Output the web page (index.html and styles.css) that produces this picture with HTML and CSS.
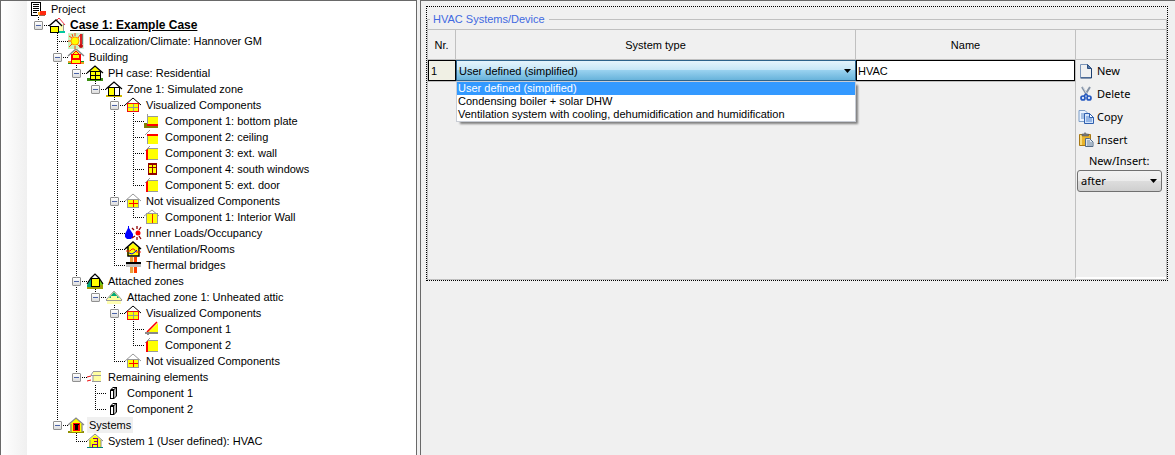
FILE: index.html
```html
<!DOCTYPE html>
<html lang="en">
<head>
<meta charset="utf-8">
<title>HVAC Systems/Device</title>
<link rel="stylesheet" href="styles.css">
</head>
<body>
<svg class="sprite" aria-hidden="true">
  <defs>
    <linearGradient id="paper" x1="0" y1="0" x2="1" y2="1"><stop offset="0" stop-color="#fff"/><stop offset="0.6" stop-color="#f4f8fd"/><stop offset="1" stop-color="#a9c4e6"/></linearGradient>
    <symbol id="i-project" viewBox="0 0 19 16">
      <path d="M2 1h10v13h-10z" fill="#fff"/><path d="M2 1h10v1h-10zM2 1h1v14h-1zM2 14h7v1h-7zM11 1h1v9h-1z" fill="#000"/>
      <path d="M4 3h6v1h-6zM4 5h6v1h-6zM4 7h6v1h-6zM4 9h6v1h-6zM4 11h4v1h-4z" fill="#000"/>
      <path d="M11 10h6v4h-6z" fill="#ff2a10"/><path d="M9 11h2v3h-2z" fill="#ffa820"/><path d="M10 14h6v1h-6z" fill="#9a6a50"/>
    </symbol>
    <symbol id="i-case" viewBox="0 0 19 16">
      <path d="M6 6l5-5 6 7" fill="#fff" stroke="#f03040"/><path d="M10 7h5v7h-5z" fill="#ffffb0"/><path d="M15 7h1v7h-1z" fill="#999"/>
      <path d="M9 14h8v2h-8z" fill="#00c8a0"/>
      <path d="M1 9l7-6 6 6z" fill="#fff"/><path d="M1 9l7-6 6 6" fill="none" stroke="#000" stroke-width="1.300"/><path d="M2 9h9v7h-9z" fill="#000"/><path d="M3 10h7v5h-7z" fill="#ff0"/>
    </symbol>
    <symbol id="i-climate" viewBox="0 0 19 16">
      <path d="M1 0h16v16h-16z" fill="#c9f5bd"/><path d="M11 0h6v16h-6z" fill="#d8eed8"/>
      <path d="M8 0v3M8 13v3M1 8h3M2 3l3 2M13 2l-2 3M2 14l3-3M13 14l-3-3M5 1l1 3" stroke="#ff3b10" fill="none"/>
      <circle cx="8" cy="8" r="4" fill="#ff0" stroke="#f90"/>
      <path d="M13 1h2v11h-2z" fill="#e02020"/><path d="M15 1h1v10h-1z" fill="#777"/><circle cx="14" cy="13" r="2" fill="#c01010"/>
    </symbol>
    <symbol id="i-building" viewBox="0 0 19 16">
      <path d="M1 12h16v3h-16z" fill="#0c9a20"/><path d="M1 12h3v2h-3zM13 13h4v2h-4z" fill="#e8a020"/>
      <path d="M5 5l4-4 4 4z" fill="#ff0"/><path d="M4 5h10v10h-10z" fill="#f00"/><path d="M6 6h6v3h-6zM5 11h8v3h-8z" fill="#ff0"/>
      <path d="M5 6l4-4 4 4" fill="none" stroke="#f00"/><path d="M1 7l8-7 8 7" fill="none" stroke="#888" stroke-width="1.500"/>
    </symbol>
    <symbol id="i-case-house" viewBox="0 0 19 16">
      <path d="M1 13h16v3h-16z" fill="#3a8f10"/><path d="M3 7l6-6 6 6z" fill="#ff0"/><path d="M4 6h11v9h-11z" fill="#000"/>
      <path d="M5 7h4v3h-4zM10 7h4v3h-4zM5 11h4v3h-4zM10 11h4v3h-4z" fill="#ff0"/><path d="M1 8l8-7 8 7" fill="none" stroke="#000" stroke-width="1.200"/>
    </symbol>
    <symbol id="i-zone" viewBox="0 0 19 16">
      <path d="M1 14h16v2h-16z" fill="#d0b800"/><path d="M3 6h12v9h-12z" fill="#000"/><path d="M4 7h5v7h-5z" fill="#ff0"/><path d="M10 7h4v7h-4z" fill="#fff"/>
      <path d="M1 8l8-7 8 7" fill="none" stroke="#000" stroke-width="1.200"/>
    </symbol>
    <symbol id="i-visual" viewBox="0 0 19 16">
      <path d="M1 8l8-7 8 7" fill="none" stroke="#000"/><path d="M3 6h12v9h-12z" fill="#f01010"/><path d="M4 7h10v7h-10z" fill="#ff0"/><path d="M9 7h1v7h-1zM4 10h10v1h-10z" fill="#999"/>
    </symbol>
    <symbol id="i-hidden" viewBox="0 0 19 16">
      <path d="M1 8l8-7 8 7" fill="none" stroke="#999"/><path d="M3 6h12v9h-12z" fill="#999"/><path d="M4 7h10v7h-10z" fill="#ff0"/><path d="M9 7h1v7h-1zM5 10h9v1h-9z" fill="#f00"/>
    </symbol>
    <symbol id="i-interior" viewBox="0 0 19 16">
      <path d="M1 7l8-6 7 6" fill="none" stroke="#999"/><path d="M3 4h12v11h-12z" fill="#999"/><path d="M4 5h10v9h-10z" fill="#ff0"/><path d="M9 5h1v9h-1z" fill="#f02000"/>
    </symbol>
    <symbol id="i-plate" viewBox="0 0 19 16">
      <path d="M1 10h14v5h-14z" fill="#808000"/><path d="M4 3h11v8h-11z" fill="#ff0"/><path d="M4 11h11v2h-11z" fill="#f00"/><path d="M4 1h1v10h-1zM4 3h11v1h-11z" fill="#999"/>
    </symbol>
    <symbol id="i-ceiling" viewBox="0 0 19 16">
      <path d="M4 6h11v9h-11z" fill="#ff0"/><path d="M4 5h11v2h-11z" fill="#f00"/><path d="M4 7h1v8h-1z" fill="#999"/><path d="M2 6l5-5" stroke="#999"/>
    </symbol>
    <symbol id="i-wall" viewBox="0 0 19 16">
      <path d="M4 4h11v11h-11z" fill="#ff0"/><path d="M3 4h2v11h-2z" fill="#f00"/><path d="M4 3h11v1h-11zM5 14h10v1h-10z" fill="#999"/><path d="M2 6l5-5" stroke="#999"/>
    </symbol>
    <symbol id="i-window" viewBox="0 0 19 16">
      <path d="M5 2h9v12h-9z" fill="#900000"/><path d="M6 4h3v2h-3zM10 4h3v2h-3zM6 7h3v5h-3zM10 7h3v5h-3z" fill="#ff0"/>
    </symbol>
    <symbol id="i-loads" viewBox="0 0 19 16">
      <path d="M4 1h1v2l4 6v3l-2 2h-4l-2-2v-3l3-6z" fill="#00f"/><circle cx="14" cy="8" r="2.500" fill="#f00"/>
      <path d="M8 3l2 2M13 1v3M17 2l-2 3M8 13l3-2M13 15v-3M17 14l-2-3" stroke="#900000" stroke-width="1.300"/>
    </symbol>
    <symbol id="i-vent" viewBox="0 0 19 16">
      <path d="M3 7l6-5 6 5v8h-12z" fill="#ff0"/><path d="M1 8l8-7 8 7M4 6v9h11v-9" fill="none" stroke="#000" stroke-width="1.400"/>
      <path d="M2 10h4l2-2h2l2 3h5" fill="none" stroke="#f02010"/><path d="M5 12l3 1 3-2 2-2" fill="none" stroke="#00f"/>
    </symbol>
    <symbol id="i-bridge" viewBox="0 0 19 16">
      <path d="M6 0h3v16h-3z" fill="#e8a040"/><path d="M9 0h1v16h-1z" fill="#fff0c0"/><path d="M10 0h3v16h-3z" fill="#ff3a00"/><path d="M2 5h15v2h-15z" fill="#000"/><path d="M2 7h15v3h-15z" fill="#c0c0c0"/>
    </symbol>
    <symbol id="i-attached" viewBox="0 0 19 16">
      <path d="M1 12l4-7h8l4 7z" fill="#00a878"/><path d="M13 5l4 5v3h-4z" fill="#70c810"/><path d="M1 12h16v4h-16z" fill="#a0a000"/><path d="M1 12h4v2h-4z" fill="#00a878"/>
      <path d="M5 6l4-5 4 5z" fill="#fff"/><path d="M1 11l4-6 4-4 4 4 4 6" fill="none" stroke="#000" stroke-width="1.200"/><path d="M5 5h9v9h-9z" fill="#000"/><path d="M6 6h7v7h-7z" fill="#ff0"/>
    </symbol>
    <symbol id="i-attic" viewBox="0 0 19 16">
      <path d="M2 11h14v4h-14z" fill="#ffffb0"/><path d="M1 11l8-9 8 9z" fill="#ffffa0"/><path d="M4 9l5-6 5 6z" fill="#00a878"/><path d="M6 7h6v4h-6z" fill="#ffffa0"/><path d="M1 11l8-9 8 9" fill="none" stroke="#999"/><path d="M1 11h16v1h-16z" fill="#999"/>
    </symbol>
    <symbol id="i-slope" viewBox="0 0 19 16">
      <path d="M5 11l10-9v9z" fill="#ff0"/><path d="M4 11l10-10" stroke="#f00" stroke-width="1.600"/><path d="M2 11h13v2h-13zM4 13h2v1h-2z" fill="#888"/>
    </symbol>
    <symbol id="i-remaining" viewBox="0 0 19 16">
      <path d="M7 3h8v9h-8z" fill="#ffffa0"/><path d="M7 2h8v1h-8zM5 6h10v1h-10zM6 12h9v1h-9z" fill="#999"/><path d="M7 7v5M7 3l-2 3" stroke="#999"/><path d="M1 8l4-1M1 12l4-1" stroke="#f01010"/>
    </symbol>
    <symbol id="i-panel" viewBox="0 0 19 16">
      <path d="M5 5l3-3h4v9l-3 3h-4z" fill="#000"/><path d="M6 6h2v7h-2z" fill="#fff"/><path d="M9 5l2-2v8l-2 2z" fill="#b0b0b0"/><path d="M7 4l1-1h2l-1 1z" fill="#fff"/>
    </symbol>
    <symbol id="i-systems" viewBox="0 0 19 16">
      <path d="M1 14h16v2h-16z" fill="#909000"/><path d="M3 7l6-6 6 6v8h-12z" fill="#ff0"/><path d="M1 8l8-7 8 7M4 7v8M15 7v8" fill="none" stroke="#888" stroke-width="1.300"/>
      <path d="M6 6h7v8h-7z" fill="#f00"/><path d="M7 7h5v1h-1v5h-3v-5h-1z" fill="#000"/>
    </symbol>
    <symbol id="i-system" viewBox="0 0 19 16">
      <path d="M1 14h16v1h-16z" fill="#008080"/><path d="M3 7l6-5 6 5v7h-12z" fill="#ff0"/><path d="M1 8l8-7 8 7M4 7v7M15 7v7" fill="none" stroke="#888"/>
      <path d="M7 5h5v10h-1v-3h-4v3h-1v-4h5v-2h-3v-1h3v-2h-4z" fill="#800080"/>
    </symbol>
    <symbol id="i-new" viewBox="0 0 16 16">
      <path d="M2.500 1.500h7l4 4v9h-11z" fill="url(#paper)" stroke="#7a94b8"/><path d="M13.500 5.500v9.500h-11" fill="none" stroke="#1d3f70"/><path d="M9.500 1.500v4h4z" fill="#557aa8" stroke="#2e4f80"/>
    </symbol>
    <symbol id="i-delete" viewBox="0 0 16 16">
      <path d="M4 1l5 8M12 1l-5 8" stroke="#8593a6" stroke-width="2"/><path d="M5 1l4 7" stroke="#d3dae3"/>
      <circle cx="5" cy="12" r="2" fill="#dfe9fa" stroke="#2458c0" stroke-width="1.700"/><circle cx="11" cy="12" r="2" fill="#dfe9fa" stroke="#2458c0" stroke-width="1.700"/><path d="M6 10l2-2 2 2" fill="none" stroke="#2458c0" stroke-width="1.500"/>
    </symbol>
    <symbol id="i-copy" viewBox="0 0 16 16">
      <path d="M1 1.500h6l3 3v8h-9z" fill="#eaf3ff" stroke="#7d9ec8"/><path d="M3 5h4M3 7h3M3 9h3" stroke="#5e8cc8"/>
      <path d="M6.500 4.500h5l4 4v6h-9z" fill="#d4e5fb" stroke="#2f5fae"/><path d="M8 8h4M8 10h6M8 12h6" stroke="#5585cf"/><path d="M11.500 4.500v4h4z" fill="#fff" stroke="#2f5fae"/>
    </symbol>
    <symbol id="i-insert" viewBox="0 0 16 16">
      <path d="M1.500 2.500h11v11h-11z" fill="#e9b32a" stroke="#a87814"/><path d="M2 3h2v10h-2z" fill="#f9dc78"/><path d="M4 3v-1h2l1-1.500 1.500 1.500h2v2h-6.500z" fill="#777" stroke="#555" stroke-width=".5"/>
      <path d="M7.500 6.500h4l3.500 3.500v4.500h-7.500z" fill="#dce5ee" stroke="#536b86"/><path d="M9 9h3M9 11h5M9 13h5" stroke="#7087a0"/>
    </symbol>
  </defs>
</svg>

<div class="app">
  <nav class="tree-pane" aria-label="Project tree">
    <div class="tree">
      <div class="row"><svg class="icon"><use href="#i-project"/></svg><span class="label">Project</span></div>
      <ul class="branch root">
        <li><div class="row"><button class="toggle" aria-label="Collapse Case 1"></button><svg class="icon"><use href="#i-case"/></svg><span class="label current">Case 1: Example Case</span></div>
          <ul class="branch">
            <li><div class="row leaf"><svg class="icon"><use href="#i-climate"/></svg><span class="label">Localization/Climate: Hannover GM</span></div></li>
            <li><div class="row"><button class="toggle" aria-label="Collapse Building"></button><svg class="icon"><use href="#i-building"/></svg><span class="label">Building</span></div>
              <ul class="branch">
                <li><div class="row"><button class="toggle" aria-label="Collapse PH case"></button><svg class="icon"><use href="#i-case-house"/></svg><span class="label">PH case: Residential</span></div>
                  <ul class="branch">
                    <li><div class="row"><button class="toggle" aria-label="Collapse Zone 1"></button><svg class="icon"><use href="#i-zone"/></svg><span class="label">Zone 1: Simulated zone</span></div>
                      <ul class="branch">
                        <li><div class="row"><button class="toggle" aria-label="Collapse Visualized Components"></button><svg class="icon"><use href="#i-visual"/></svg><span class="label">Visualized Components</span></div>
                          <ul class="branch">
                            <li><div class="row leaf"><svg class="icon"><use href="#i-plate"/></svg><span class="label">Component 1: bottom plate</span></div></li>
                            <li><div class="row leaf"><svg class="icon"><use href="#i-ceiling"/></svg><span class="label">Component 2: ceiling</span></div></li>
                            <li><div class="row leaf"><svg class="icon"><use href="#i-wall"/></svg><span class="label">Component 3: ext. wall</span></div></li>
                            <li><div class="row leaf"><svg class="icon"><use href="#i-window"/></svg><span class="label">Component 4: south windows</span></div></li>
                            <li><div class="row leaf"><svg class="icon"><use href="#i-wall"/></svg><span class="label">Component 5: ext. door</span></div></li>
                          </ul>
                        </li>
                        <li><div class="row"><button class="toggle" aria-label="Collapse Not visualized Components"></button><svg class="icon"><use href="#i-hidden"/></svg><span class="label">Not visualized Components</span></div>
                          <ul class="branch">
                            <li><div class="row leaf"><svg class="icon"><use href="#i-interior"/></svg><span class="label">Component 1: Interior Wall</span></div></li>
                          </ul>
                        </li>
                        <li><div class="row leaf"><svg class="icon"><use href="#i-loads"/></svg><span class="label">Inner Loads/Occupancy</span></div></li>
                        <li><div class="row leaf"><svg class="icon"><use href="#i-vent"/></svg><span class="label">Ventilation/Rooms</span></div></li>
                        <li><div class="row leaf"><svg class="icon"><use href="#i-bridge"/></svg><span class="label">Thermal bridges</span></div></li>
                      </ul>
                    </li>
                  </ul>
                </li>
                <li><div class="row"><button class="toggle" aria-label="Collapse Attached zones"></button><svg class="icon"><use href="#i-attached"/></svg><span class="label">Attached zones</span></div>
                  <ul class="branch">
                    <li><div class="row"><button class="toggle" aria-label="Collapse Attached zone 1"></button><svg class="icon"><use href="#i-attic"/></svg><span class="label">Attached zone 1: Unheated attic</span></div>
                      <ul class="branch">
                        <li><div class="row"><button class="toggle" aria-label="Collapse Visualized Components"></button><svg class="icon"><use href="#i-visual"/></svg><span class="label">Visualized Components</span></div>
                          <ul class="branch">
                            <li><div class="row leaf"><svg class="icon"><use href="#i-slope"/></svg><span class="label">Component 1</span></div></li>
                            <li><div class="row leaf"><svg class="icon"><use href="#i-wall"/></svg><span class="label">Component 2</span></div></li>
                          </ul>
                        </li>
                        <li><div class="row leaf"><svg class="icon"><use href="#i-hidden"/></svg><span class="label">Not visualized Components</span></div></li>
                      </ul>
                    </li>
                  </ul>
                </li>
                <li><div class="row"><button class="toggle" aria-label="Collapse Remaining elements"></button><svg class="icon"><use href="#i-remaining"/></svg><span class="label">Remaining elements</span></div>
                  <ul class="branch">
                    <li><div class="row leaf"><svg class="icon"><use href="#i-panel"/></svg><span class="label">Component 1</span></div></li>
                    <li><div class="row leaf"><svg class="icon"><use href="#i-panel"/></svg><span class="label">Component 2</span></div></li>
                  </ul>
                </li>
              </ul>
            </li>
            <li><div class="row"><button class="toggle" aria-label="Collapse Systems"></button><svg class="icon"><use href="#i-systems"/></svg><span class="label selected">Systems</span></div>
              <ul class="branch">
                <li><div class="row leaf"><svg class="icon"><use href="#i-system"/></svg><span class="label">System 1 (User defined): HVAC</span></div></li>
              </ul>
            </li>
          </ul>
        </li>
      </ul>
    </div>
  </nav>

  <main class="detail">
    <div class="focus-frame">
      <fieldset class="group">
        <legend>HVAC Systems/Device</legend>
        <div class="group-body">
          <div class="grid-area">
            <table class="devices">
              <colgroup><col class="col-nr"><col><col class="col-name"></colgroup>
              <thead><tr><th scope="col">Nr.</th><th scope="col">System type</th><th scope="col">Name</th></tr></thead>
              <tbody>
                <tr>
                  <td class="nr">1</td>
                  <td class="type">
                    <div class="combo">
                      <select class="type-select" aria-label="System type">
                        <option selected>User defined (simplified)</option>
                        <option>Condensing boiler + solar DHW</option>
                        <option>Ventilation system with cooling, dehumidification and humidification</option>
                      </select>
                      <svg class="arrow" viewBox="0 0 7 4"><path d="M0 0h7l-3.500 4z"/></svg>
                      <ul class="options">
                        <li class="active">User defined (simplified)</li>
                        <li>Condensing boiler + solar DHW</li>
                        <li>Ventilation system with cooling, dehumidification and humidification</li>
                      </ul>
                    </div>
                  </td>
                  <td class="name"><input class="name-input" type="text" value="HVAC" aria-label="Name"></td>
                </tr>
              </tbody>
            </table>
          </div>
          <div class="actions">
            <div class="actions-head"></div>
            <button class="action"><svg class="glyph"><use href="#i-new"/></svg>New</button>
            <button class="action"><svg class="glyph"><use href="#i-delete"/></svg>Delete</button>
            <button class="action"><svg class="glyph"><use href="#i-copy"/></svg>Copy</button>
            <button class="action"><svg class="glyph"><use href="#i-insert"/></svg>Insert</button>
            <label class="position-label" for="position">New/Insert:</label>
            <div class="combo position">
              <select id="position" class="position-select"><option>after</option><option>before</option></select>
              <svg class="arrow" viewBox="0 0 7 4"><path d="M0 0h7l-3.500 4z"/></svg>
            </div>
          </div>
        </div>
      </fieldset>
    </div>
  </main>
</div>
</body>
</html>
```
FILE: styles.css
```css
* { box-sizing: border-box; }

body {
  margin: 0;
  background: #f0f0f0;
  color: #000;
  font: 11px/16px "Liberation Sans", Arial, sans-serif;
}

ul { list-style: none; margin: 0; padding: 0; }

button, input, select { font: inherit; color: inherit; margin: 0; }

.sprite { display: none; }

.app {
  display: flex;
  gap: 3px;
  min-height: 100vh;
}

/* Project tree */
.tree-pane {
  flex: 0 0 417px;
  border: 1px solid #696969;
  border-bottom: 0;
  padding-left: 26px;
  background: linear-gradient(to right, #fff, #f0f0f0) no-repeat 0 0 / 26px 100%, #fff;
}

.tree { padding-left: 2px; }

.branch { margin-left: 19px; }
.branch.root { margin-left: 0; }

/* Dotted guide running down the side of each branch */
.branch > li {
  background: repeating-linear-gradient(to bottom, #000 0 1px, transparent 1px 2px) no-repeat 9px 0 / 1px 100%;
}
.branch > li:last-child { background-size: 1px 9px; }

.row {
  display: flex;
  align-items: center;
  height: 16px;
  white-space: nowrap;
}

.branch .row {
  background: repeating-linear-gradient(to right, #000 0 1px, transparent 1px 2px) no-repeat 9px 8px / 11px 1px;
}

.leaf { padding-left: 19px; }

.toggle {
  flex: none;
  width: 9px;
  height: 9px;
  margin: 0 5px;
  padding: 0;
  border: 1px solid #919191;
  border-radius: 1px;
  background:
    linear-gradient(#4b63a7, #4b63a7) no-repeat center / 5px 1px,
    linear-gradient(#fff, #dcdcdc);
}

.icon {
  flex: none;
  width: 19px;
  height: 16px;
}

.label { padding: 0 2px; margin-left: 1px; }
.label.current {
  font-size: 12px;
  font-weight: bold;
  text-decoration: underline;
}
.label.selected { background: #f0f0f0; }

/* Detail pane */
.detail {
  flex: 1;
  min-width: 0;
  border: solid #696969;
  border-width: 1px 0 0 1px;
  padding: 5px 7px 5px 5px;
}

.focus-frame { border: 1px dotted #000; padding-top: 4px; }

.group {
  min-width: 0;
  margin: 0;
  padding: 0;
  border: 1px solid #c0c0c0;
}

.group legend {
  margin-left: 2px;
  padding: 0 4px 0 3px;
  color: #4169e1;
}

.group-body {
  display: flex;
  min-height: 250px;
  margin-top: 2px;
  border-top: 1px solid #c0c0c0;
}

.grid-area { flex: 1; min-width: 0; }

.devices {
  width: 100%;
  table-layout: fixed;
  border-collapse: separate;
  border-spacing: 0;
  border-bottom: 1px solid #c0c0c0;
}

.col-nr { width: 28px; }
.col-name { width: 219px; }

.devices th {
  height: 30px;
  padding: 0;
  border-right: 1px solid #c0c0c0;
  border-bottom: 1px solid #c0c0c0;
  font-weight: normal;
}
.devices th:last-child { border-right: 0; }

.devices td { height: 21px; padding: 0; }
.devices .nr {
  padding-left: 2px;
  border: 1px solid #000;
  background: #f0f0e4;
}

.combo { position: relative; }

.arrow {
  position: absolute;
  top: 9px;
  right: 5px;
  width: 7px;
  height: 4px;
  pointer-events: none;
}

.type-select {
  display: block;
  width: 100%;
  height: 21px;
  padding: 0 2px;
  border: 1px solid #2c628b;
  border-radius: 0;
  appearance: none;
  background: linear-gradient(#e5f4fc, #c4e5f6 50%, #98d1ef 50%, #68b3db);
}

.options {
  position: absolute;
  top: 100%;
  left: 0;
  width: 100%;
  border: 1px solid #c8ccd4;
  background: #fff;
  box-shadow: 3px 3px 2px -1px #808080;
  line-height: 13px;
  white-space: nowrap;
}
.options li { padding-left: 1px; }
.options .active { background: #3399ff; color: #fff; }

.name-input {
  display: block;
  width: 100%;
  height: 21px;
  padding: 0 1px;
  border: 1px solid #000;
  background: #fff;
}

/* Row commands */
.actions {
  flex: 0 0 91px;
  display: flex;
  flex-direction: column;
  border-left: 1px solid #c0c0c0;
  border-bottom: 2px solid #fff;
  font-family: "Noto Sans", "Open Sans", sans-serif;
}

.actions-head { height: 30px; border-bottom: 1px solid #c0c0c0; }

.action {
  display: flex;
  align-items: center;
  gap: 3px;
  height: 23px;
  padding: 0 2px 2px;
  border: 0;
  background: none;
}

.glyph { flex: none; width: 16px; height: 16px; }

.position-label { padding-left: 13px; line-height: 18px; }

.position { margin: 0 4px 0 1px; }

.position-select {
  display: block;
  width: 100%;
  height: 22px;
  padding: 0 3px;
  border: 1px solid #707070;
  border-radius: 3px;
  appearance: none;
  background: linear-gradient(#f2f2f2, #ebebeb 50%, #dddddd 50%, #cfcfcf);
}
```
